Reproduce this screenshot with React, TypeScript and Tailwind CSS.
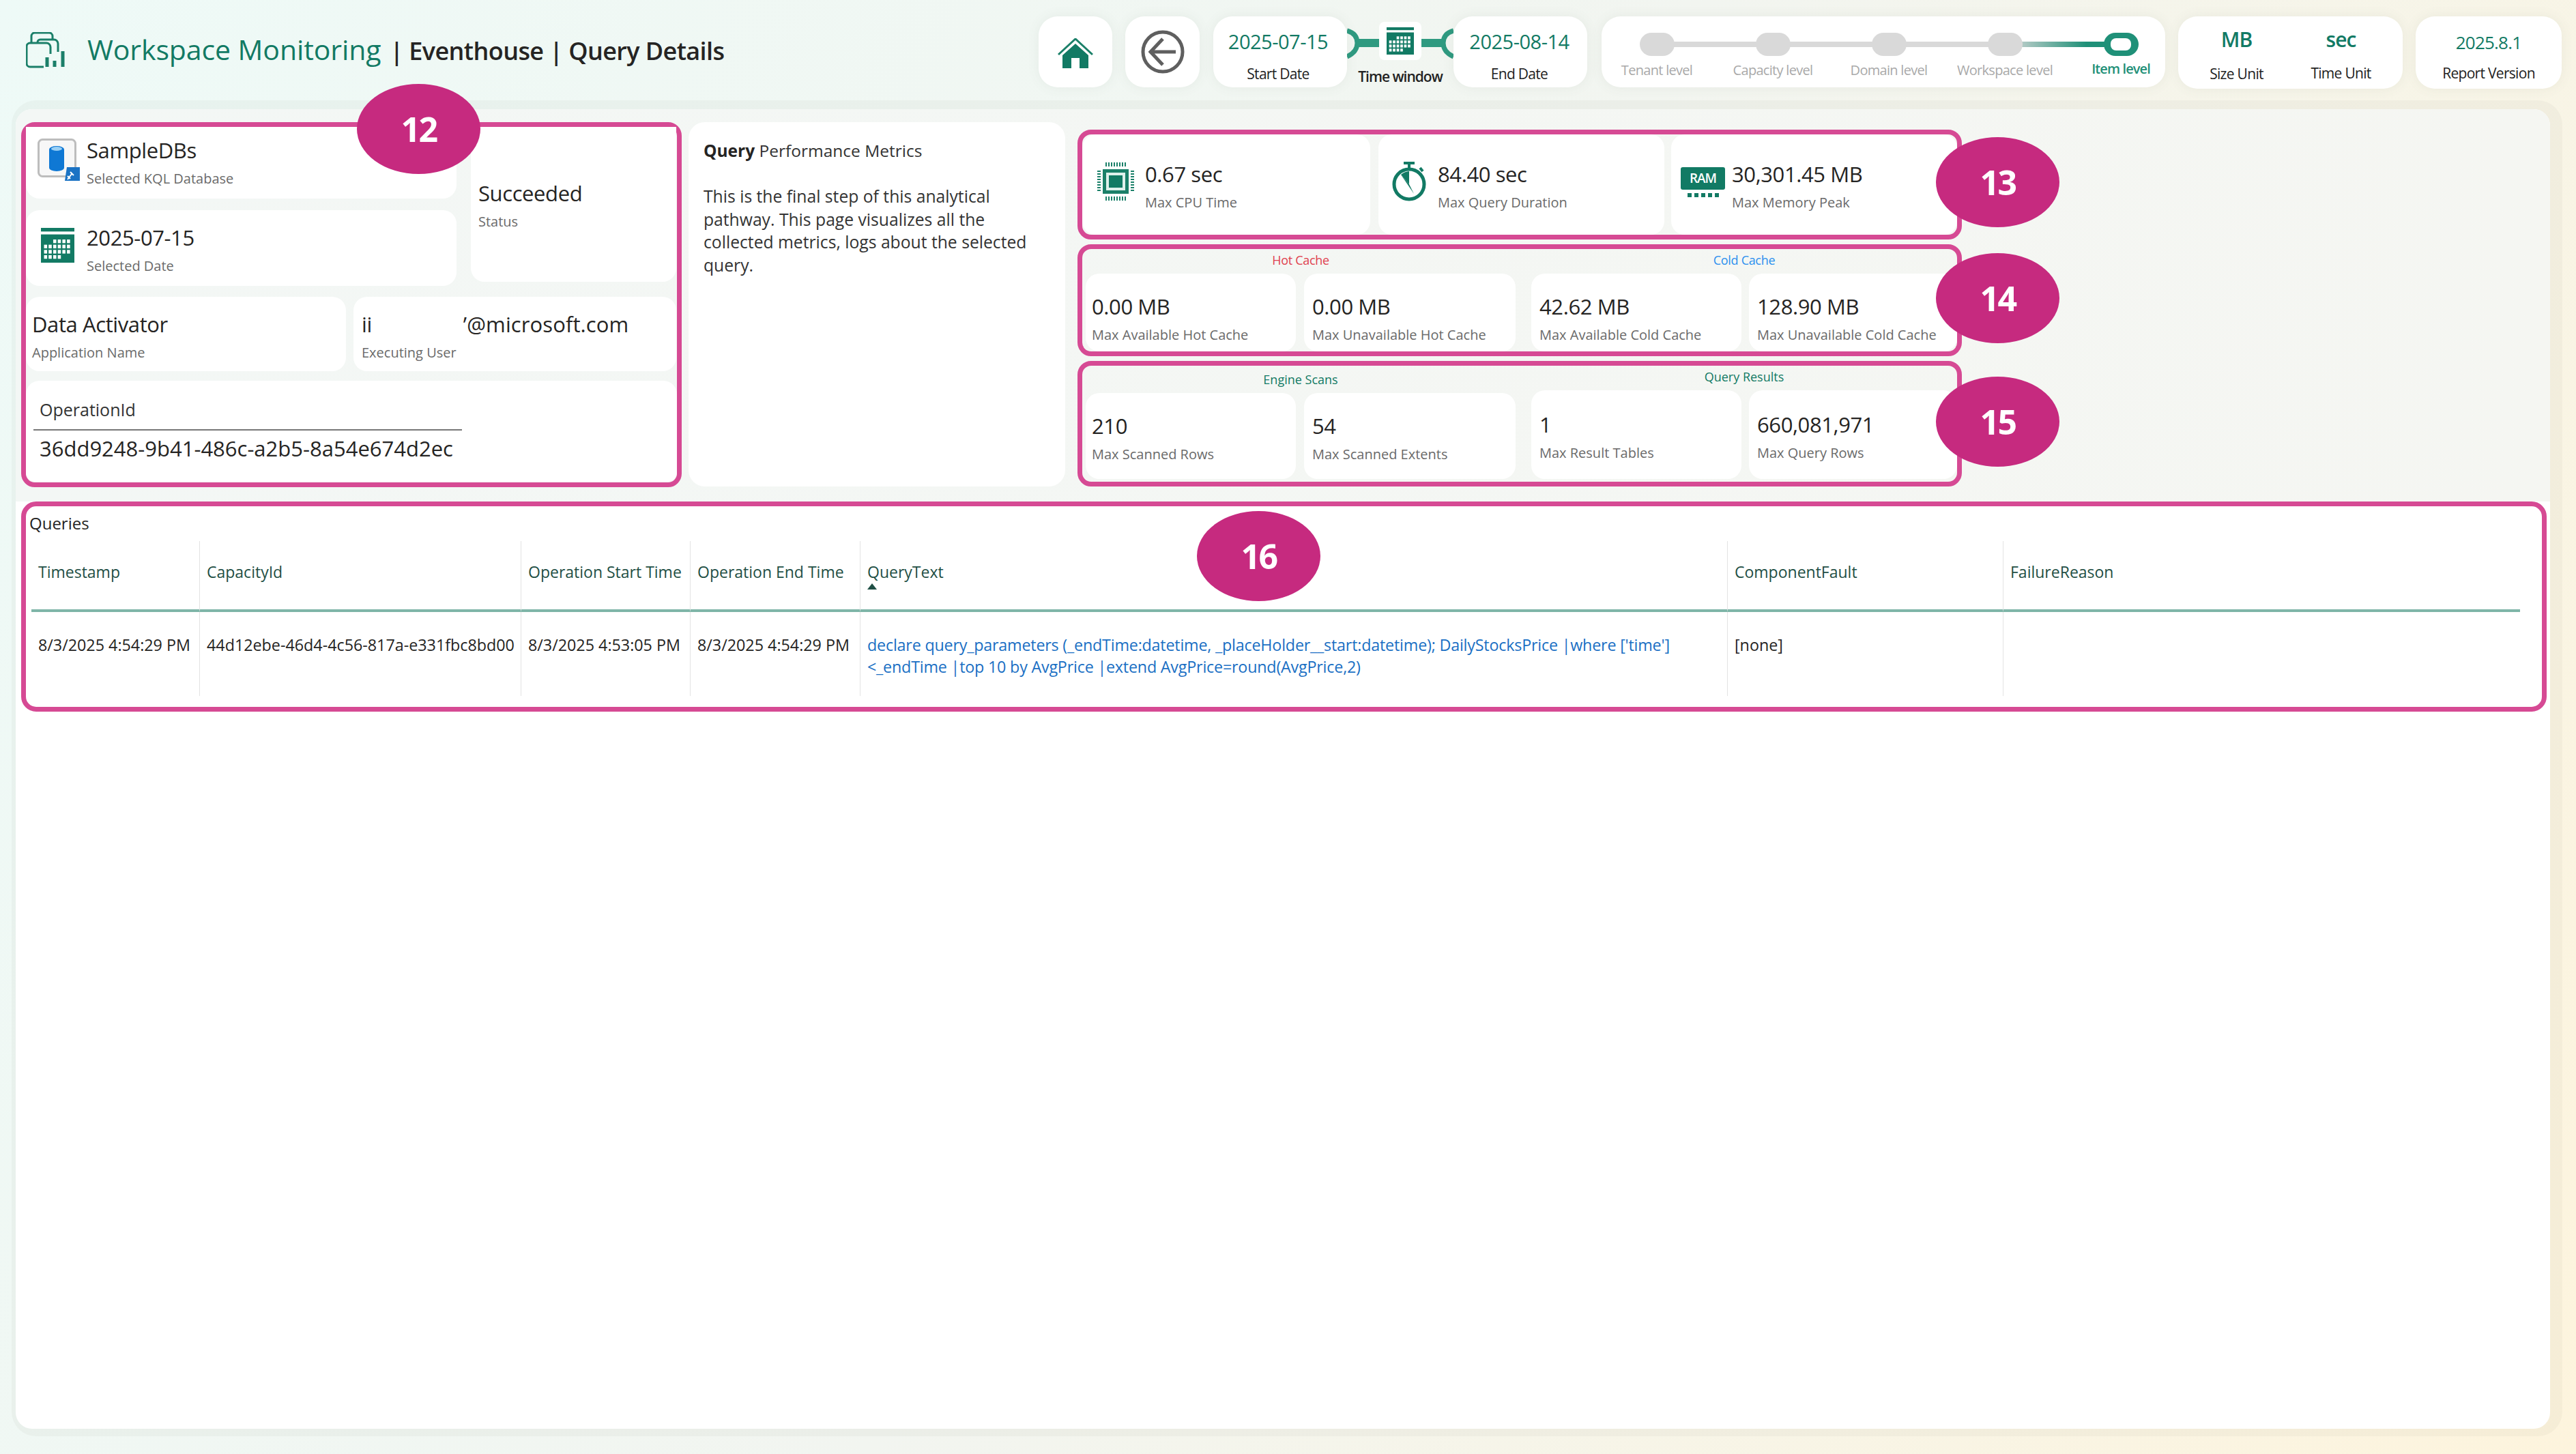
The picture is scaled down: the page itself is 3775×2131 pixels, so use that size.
import type { ReactNode } from 'react'

const tile = 'rounded-[28px] bg-white shadow-[0_0_18px_rgba(90,100,90,0.08)]'

function Logo() {
  return (
    <svg width="58" height="53" viewBox="0 0 58 53" fill="none" stroke="#1b7f69" strokeWidth="3">
      <path d="M8 16V6a5 5 0 0 1 5-5h21a5 5 0 0 1 5 5v5" />
      <path d="M17 16v-1a4 4 0 0 1 4-4h20a6 6 0 0 1 6 6v12" />
      <path d="M26 51H6a5 5 0 0 1-5-5V21a5 5 0 0 1 5-5h24a6 6 0 0 1 6 6v10" />
      <path d="M31 51V37M42 51v-9M54 51V28" strokeWidth="5" />
    </svg>
  )
}

function HomeIcon() {
  return (
    <svg width="52" height="44" viewBox="0 0 52 44">
      <path d="M1 24 26 1l25 23" fill="none" stroke="#1b8069" strokeWidth="3" />
      <path d="M7 44V25L26 8l19 17v19H32V29H20v15z" fill="#127a64" />
    </svg>
  )
}

function BackIcon() {
  return (
    <svg width="64" height="64" viewBox="0 0 64 64" fill="none" stroke="#5f5f5f">
      <circle cx="32" cy="32" r="29" strokeWidth="5" />
      <path d="M51 32H14M32 13 14 32l18 19" strokeWidth="5" />
    </svg>
  )
}

function CalendarIcon({ w, h }: { w: number; h: number }) {
  const cells = []
  for (let r = 0; r < 4; r++) {
    for (let c = 0; c < 6; c++) {
      if ((r === 0 && c < 2) || (r === 3 && c > 3)) continue
      cells.push(<rect key={`${r}-${c}`} x={5 + c * 7.4} y={16 + r * 7.2} width="5" height="5" fill="#fff" />)
    }
  }
  return (
    <svg width={w} height={h} viewBox="0 0 54 48" preserveAspectRatio="none">
      <rect x="0" y="0" width="54" height="5" fill="#127a64" />
      <rect x="0" y="9" width="54" height="39" fill="#127a64" />
      {cells}
    </svg>
  )
}

function DbIcon() {
  return (
    <svg width="62" height="62" viewBox="0 0 62 62">
      <rect x="1.5" y="1.5" width="54" height="54" rx="6" fill="#f7f7f7" stroke="#bdbdbd" strokeWidth="3" />
      <path d="M17 16a11 5 0 0 1 22 0v27a11 5 0 0 1-22 0z" fill="#0f78d4" />
      <ellipse cx="28" cy="15" rx="8" ry="3" fill="#9ad0f5" />
      <path d="M43 42h19v20H40z" fill="#1b73c4" />
      <path d="m44 60 6-8m-2-3 5 5m-9 1 4 4" stroke="#fff" strokeWidth="2" fill="none" />
    </svg>
  )
}

function CpuIcon() {
  const pins = [0, 1, 2, 3, 4, 5, 6, 7]
  return (
    <svg width="54" height="56" viewBox="0 0 54 56">
      {pins.map((i) => (
        <g key={i} fill="#1b8069">
          <rect x={12 + i * 4} y="0" width="2" height="6" />
          <rect x={12 + i * 4} y="50" width="2" height="6" />
          <rect x="0" y={12 + i * 4} width="5" height="2" />
          <rect x="49" y={12 + i * 4} width="5" height="2" />
        </g>
      ))}
      <rect x="8" y="10" width="38" height="36" fill="#1b8069" />
      <rect x="13" y="15" width="28" height="26" fill="#dff1ec" />
      <rect x="17" y="19" width="20" height="18" fill="#127a64" />
    </svg>
  )
}

function TimerIcon() {
  return (
    <svg width="50" height="58" viewBox="0 0 50 58" fill="none" stroke="#127a64">
      <path d="M17 2h16M25 2v7M41 9l4 5" strokeWidth="4" />
      <circle cx="25" cy="33" r="22" strokeWidth="5" />
      <path d="M25 33V14a19 19 0 0 0-12 5z" fill="#127a64" stroke="none" />
      <path d="M13 19l12 14 7 14z" fill="#127a64" stroke="none" />
    </svg>
  )
}

function RamIcon() {
  return (
    <div className="flex w-[65px] flex-col items-center">
      <div className="flex h-[33px] w-[65px] items-center justify-center rounded-[3px] bg-[#127a64] text-[19px] font-semibold tracking-[-1px] text-white">
        RAM
      </div>
      <div className="mt-[5px] flex gap-[4px]">
        {[0, 1, 2, 3, 4].map((i) => (
          <div key={i} className="h-[6px] w-[6px] bg-[#127a64]" />
        ))}
      </div>
    </div>
  )
}

function Connector() {
  return (
    <div className="relative mt-[8px] flex h-[96px] w-[156px] flex-col items-center">
      <svg className="absolute left-0 top-0" width="156" height="60" viewBox="0 0 156 60" fill="none" stroke="#2f9a80">
        <path d="M0 13c11 3 15 10 15 18s-4 15-15 20" strokeWidth="7" />
        <path d="M156 13c-11 3-15 10-15 18s4 15 15 20" strokeWidth="7" />
        <path d="M14 31h128" strokeWidth="12" />
      </svg>
      <div className="relative flex h-[63px] w-[62px] items-center justify-center rounded-[8px] bg-white">
        <CalendarIcon w={40} h={40} />
      </div>
      <div className="relative mt-[9px] whitespace-nowrap text-[21px] font-semibold tracking-[-1px] text-[#222]">Time window</div>
    </div>
  )
}

function Levels() {
  const levels = ['Tenant level', 'Capacity level', 'Domain level', 'Workspace level']
  return (
    <div className={`${tile} relative ml-[21px] h-[104px] w-[826px]`}>
      <div className="absolute left-[81px] top-[37px] h-[8px] w-[510px] bg-[#d9d9d9]" />
      <div className="absolute left-[590px] top-[37px] h-[8px] w-[172px] bg-[linear-gradient(90deg,#d9d9d9,#1f9078_70%)]" />
      <div className="flex">
        {levels.map((name) => (
          <div key={name} className="relative flex w-[170px] shrink-0 flex-col items-center first:ml-[-4px]">
            <div className="mt-[24px] h-[34px] w-[51px] rounded-[17px] bg-[#d9d9d9]" />
            <div className="mt-[7px] whitespace-nowrap text-[20px] leading-[28px] tracking-[-0.7px] text-[#a9a9a9]">{name}</div>
          </div>
        ))}
        <div className="relative flex w-[170px] shrink-0 flex-col items-center">
          <div className="mt-[24px] flex h-[34px] w-[51px] items-center justify-center rounded-[17px] bg-[#1f9078]">
            <div className="h-[18px] w-[30px] rounded-[8px] bg-white" />
          </div>
          <div className="mt-[5px] whitespace-nowrap text-[20px] font-semibold leading-[28px] tracking-[-0.9px] text-[#1f9078]">Item level</div>
        </div>
      </div>
    </div>
  )
}

function Header() {
  return (
    <header className="flex h-[150px] pt-[24px]">
      <div className="flex h-[104px] w-[1484px] shrink-0 items-start pl-[38px]">
        <div className="mt-[23px]">
          <Logo />
        </div>
        <div className="ml-[32px] mt-[23px] flex items-baseline whitespace-nowrap leading-[50px] text-[#252423]">
          <span className="text-[41px] font-medium tracking-[-0.1px] text-[#127a64]">Workspace Monitoring</span>
          <span className="ml-[13px] text-[36px] font-semibold tracking-[-0.6px]">| Eventhouse | Query Details</span>
        </div>
      </div>
      <div className="ml-[38px] flex items-start">
        <div className={`${tile} flex h-[104px] w-[108px] items-center justify-center pt-[3px]`}>
          <HomeIcon />
        </div>
        <div className={`${tile} ml-[19px] flex h-[104px] w-[109px] items-center justify-center`}>
          <BackIcon />
        </div>
        <div className={`${tile} relative z-10 ml-[20px] flex h-[104px] w-[196px] flex-col items-center pr-[6px]`}>
          <div className="mt-[16px] text-[29px] leading-[42px] tracking-[-0.5px] text-[#127a64]">2025-07-15</div>
          <div className="mt-[11px] text-[21px] leading-[30px] tracking-[-0.7px] text-[#222]">Start Date</div>
        </div>
        <Connector />
        <div className={`${tile} relative z-10 flex h-[104px] w-[196px] flex-col items-center pr-[3px]`}>
          <div className="mt-[16px] text-[29px] leading-[42px] tracking-[-0.5px] text-[#127a64]">2025-08-14</div>
          <div className="mt-[11px] text-[21px] leading-[30px] tracking-[-0.7px] text-[#222]">End Date</div>
        </div>
        <Levels />
        <div className={`${tile} ml-[19px] flex h-[106px] w-[329px] pl-[9px]`}>
          <div className="flex w-[153px] flex-col items-center">
            <div className="mt-[13px] text-[30px] font-semibold leading-[42px] tracking-[-1px] text-[#127a64]">MB</div>
            <div className="mt-[14px] text-[21px] leading-[30px] tracking-[-0.7px] text-[#222]">Size Unit</div>
          </div>
          <div className="flex w-[153px] flex-col items-center">
            <div className="mt-[13px] text-[30px] font-semibold leading-[42px] tracking-[-1px] text-[#127a64]">sec</div>
            <div className="mt-[13px] text-[21px] leading-[30px] tracking-[-0.7px] text-[#222]">Time Unit</div>
          </div>
        </div>
        <div className={`${tile} ml-[19px] flex h-[106px] w-[214px] flex-col items-center`}>
          <div className="mt-[18px] text-[26px] font-medium leading-[40px] tracking-[-0.8px] text-[#127a64]">2025.8.1</div>
          <div className="mt-[10px] text-[21px] leading-[30px] tracking-[-0.7px] text-[#222]">Report Version</div>
        </div>
      </div>
    </header>
  )
}

function Badge({ n, className }: { n: number; className: string }) {
  return (
    <div className={`absolute z-20 flex h-[132px] w-[181px] items-center justify-center rounded-[50%] bg-[#c62a7f] text-[50px] font-bold tracking-[-2.5px] text-white ${className}`}>
      {n}
    </div>
  )
}

function Value({ children }: { children: ReactNode }) {
  return <div className="whitespace-nowrap text-[31px] leading-[41px] tracking-[-0.4px] text-[#252423]">{children}</div>
}

function Sub({ children }: { children: ReactNode }) {
  return <div className="whitespace-nowrap text-[20px] leading-[41px] text-[#6a6a6a]">{children}</div>
}

function Stat({ value, label, className }: { value: string; label: string; className: string }) {
  return (
    <div className={`rounded-[20px] bg-white pl-[12px] ${className}`}>
      <Value>{value}</Value>
      <Sub>{label}</Sub>
    </div>
  )
}

function SelectionBox() {
  return (
    <div className="relative h-[535px] w-[968px] rounded-[20px] border-[7px] border-[#d64a94]">
      <Badge n={12} className="left-[485px] top-[-63px]" />
      <div className="flex gap-[21px]">
        <div className="flex w-[631px] flex-col gap-[17px]">
          <div className="flex h-[105px] rounded-b-[20px] bg-white pl-[17px]">
            <div className="mt-[17px]">
              <DbIcon />
            </div>
            <div className="ml-[10px] pt-[14px]">
              <Value>SampleDBs</Value>
              <Sub>Selected KQL Database</Sub>
            </div>
          </div>
          <div className="flex h-[111px] rounded-[20px] bg-white pl-[22px]">
            <div className="mt-[26px]">
              <CalendarIcon w={49} h={51} />
            </div>
            <div className="ml-[18px] pt-[20px]">
              <Value>2025-07-15</Value>
              <Sub>Selected Date</Sub>
            </div>
          </div>
        </div>
        <div className="h-[227px] w-[301px] rounded-b-[20px] bg-white pl-[11px] pt-[77px]">
          <Value>Succeeded</Value>
          <Sub>Status</Sub>
        </div>
      </div>
      <div className="mt-[16px] flex h-[109px] gap-[11px]">
        <div className="w-[469px] rounded-[20px] bg-white pl-[9px] pt-[20px]">
          <Value>Data Activator</Value>
          <Sub>Application Name</Sub>
        </div>
        <div className="w-[473px] rounded-[20px] bg-white pl-[12px] pt-[20px]">
          <Value>
            ii<span className="ml-[134px] tracking-[0.1px]">’@microsoft.com</span>
          </Value>
          <Sub>Executing User</Sub>
        </div>
      </div>
      <div className="mt-[14px] h-[148px] rounded-t-[20px] rounded-b-[14px] bg-white pl-[11px] pt-[24px]">
        <div className="ml-[9px] text-[25px] leading-[36px] text-[#333]">OperationId</div>
        <div className="mt-[11px] h-[2px] w-[628px] bg-[#777]" />
        <div className="ml-[9px] mt-[5px] whitespace-nowrap text-[31px] leading-[42px] text-[#252423]">36dd9248-9b41-486c-a2b5-8a54e674d2ec</div>
      </div>
    </div>
  )
}

function Description() {
  return (
    <div className="ml-[10px] h-[534px] w-[552px] rounded-[24px] bg-white pl-[22px] pt-[23px] text-[#333]">
      <div className="text-[24.5px] leading-[38px]">
        <span className="font-bold text-[#252423]">Query</span> Performance Metrics
      </div>
      <div className="mt-[31px] w-[490px] text-[24.7px] leading-[33.6px]">
        This is the final step of this analytical pathway. This page visualizes all the collected metrics, logs about the selected query.
      </div>
    </div>
  )
}

function PeakBox() {
  const cardClass = 'flex h-[147px] rounded-[20px] bg-white pt-[38px]'
  return (
    <div className="relative h-[161px] rounded-[20px] border-[7px] border-[#d64a94]">
      <Badge n={13} className="left-[1251px] top-[4px]" />
      <div className="flex">
        <div className={`${cardClass} w-[422px] pl-[22px]`}>
          <div className="mt-[3px]">
            <CpuIcon />
          </div>
          <div className="ml-[16px]">
            <Value>0.67 sec</Value>
            <Sub>Max CPU Time</Sub>
          </div>
        </div>
        <div className={`${cardClass} ml-[12px] w-[419px] pl-[20px]`}>
          <div className="mt-[2px]">
            <TimerIcon />
          </div>
          <div className="ml-[17px]">
            <Value>84.40 sec</Value>
            <Sub>Max Query Duration</Sub>
          </div>
        </div>
        <div className={`${cardClass} ml-[10px] w-[419px] pl-[14px]`}>
          <div className="mt-[10px]">
            <RamIcon />
          </div>
          <div className="ml-[10px]">
            <Value>30,301.45 MB</Value>
            <Sub>Max Memory Peak</Sub>
          </div>
        </div>
      </div>
    </div>
  )
}

function CacheBox() {
  const card = 'h-[114px] pt-[28px]'
  return (
    <div className="relative mt-[7px] h-[164px] rounded-[20px] border-[7px] border-[#d64a94] pl-[5px]">
      <Badge n={14} className="left-[1251px] top-[6px]" />
      <div className="flex">
        <div className="w-[630px]">
          <div className="h-[36px] pt-[2px] text-center text-[18px] font-medium leading-[28px] tracking-[-0.3px] text-[#e0424f]">Hot Cache</div>
          <div className="flex gap-[12px]">
            <Stat value="0.00 MB" label="Max Available Hot Cache" className={`${card} w-[308px] !pl-[9px]`} />
            <Stat value="0.00 MB" label="Max Unavailable Hot Cache" className={`${card} w-[310px]`} />
          </div>
        </div>
        <div className="ml-[23px] w-[624px]">
          <div className="h-[36px] pt-[2px] text-center text-[18px] font-medium leading-[28px] tracking-[-0.3px] text-[#2b90ef]">Cold Cache</div>
          <div className="flex gap-[11px]">
            <Stat value="42.62 MB" label="Max Available Cold Cache" className={`${card} w-[308px]`} />
            <Stat value="128.90 MB" label="Max Unavailable Cold Cache" className={`${card} w-[305px]`} />
          </div>
        </div>
      </div>
    </div>
  )
}

function ScanBox() {
  return (
    <div className="relative mt-[7px] h-[184px] rounded-[20px] border-[7px] border-[#d64a94] pl-[5px]">
      <Badge n={15} className="left-[1251px] top-[16px]" />
      <div className="flex">
        <div className="w-[630px]">
          <div className="h-[40px] pt-[6px] text-center text-[18px] font-medium leading-[28px] text-[#127a64]">Engine Scans</div>
          <div className="flex gap-[12px]">
            <Stat value="210" label="Max Scanned Rows" className="h-[126px] w-[308px] pt-[28px] !pl-[9px]" />
            <Stat value="54" label="Max Scanned Extents" className="h-[126px] w-[310px] pt-[28px]" />
          </div>
        </div>
        <div className="ml-[23px] w-[624px]">
          <div className="h-[36px] pt-[2px] text-center text-[18px] font-medium leading-[28px] text-[#127a64]">Query Results</div>
          <div className="flex gap-[11px]">
            <Stat value="1" label="Max Result Tables" className="h-[130px] w-[308px] pt-[30px]" />
            <Stat value="660,081,971" label="Max Query Rows" className="h-[130px] w-[305px] pt-[30px]" />
          </div>
        </div>
      </div>
    </div>
  )
}

const columns = ['Timestamp', 'CapacityId', 'Operation Start Time', 'Operation End Time', 'QueryText', 'ComponentFault', 'FailureReason']

const row = [
  '8/3/2025 4:54:29 PM',
  '44d12ebe-46d4-4c56-817a-e331fbc8bd00',
  '8/3/2025 4:53:05 PM',
  '8/3/2025 4:54:29 PM',
  "declare query_parameters (_endTime:datetime, _placeHolder__start:datetime); DailyStocksPrice |where ['time'] <_endTime |top 10 by AvgPrice |extend AvgPrice=round(AvgPrice,2)",
  '[none]',
  '',
]

function QueriesTable() {
  return (
    <div className="relative ml-[8px] h-[308px] w-[3701px] rounded-[22px] border-[7px] border-[#d64a94] bg-white">
      <Badge n={16} className="left-[1716px] top-[7px]" />
      <div className="pl-[5px] pt-[8px] text-[24px] leading-[34px] text-[#252423]">Queries</div>
      <div className="ml-[8px] mt-[9px] grid w-[3647px] grid-cols-[247px_471px_248px_249px_1271px_404px_757px] grid-rows-[104px_123px]">
        {columns.map((name, i) => (
          <div key={name} className={`relative border-b-[4px] border-[#7fb5a8] pl-[10px] pt-[28px] ${i < 6 ? 'border-r border-r-[#e3e3e3]' : ''}`}>
            <div className="whitespace-nowrap text-[23px] font-medium leading-[34px] text-[#1f4f45]">{name}</div>
            {name === 'QueryText' && <div className="h-0 w-0 border-x-[7px] border-b-[9px] border-x-transparent border-b-[#1f4f45]" />}
          </div>
        ))}
        {row.map((text, i) => (
          <div
            key={i}
            className={`pl-[10px] pt-[32px] text-[23.3px] leading-[32px] ${i === 4 ? 'pr-[30px] tracking-[-0.2px] text-[#1a6fc4]' : 'whitespace-nowrap text-[#252423]'} ${i < 6 ? 'border-r border-r-[#e3e3e3]' : ''}`}
          >
            {text}
          </div>
        ))}
      </div>
    </div>
  )
}

export default function App() {
  return (
    <div className="h-screen w-screen overflow-hidden bg-[linear-gradient(120deg,#eefaf7_0%,#f2f5f0_50%,#fdf4dd_100%)] font-['Open_Sans',sans-serif]">
      <Header />
      <main className="ml-[23px] mt-[10px] h-[1934px] w-[3714px] rounded-[24px] bg-white shadow-[6px_-1px_0_12px_rgba(120,120,100,0.05)]">
        <div className="h-[575px] rounded-t-[24px] bg-[linear-gradient(90deg,#f3f7f5,#f5f6f2)] pl-[8px] pt-[19px]">
          <div className="flex items-start">
            <SelectionBox />
            <Description />
            <div className="ml-[18px] mt-[11px] w-[1296px]">
              <PeakBox />
              <CacheBox />
              <ScanBox />
            </div>
          </div>
        </div>
        <QueriesTable />
      </main>
    </div>
  )
}
